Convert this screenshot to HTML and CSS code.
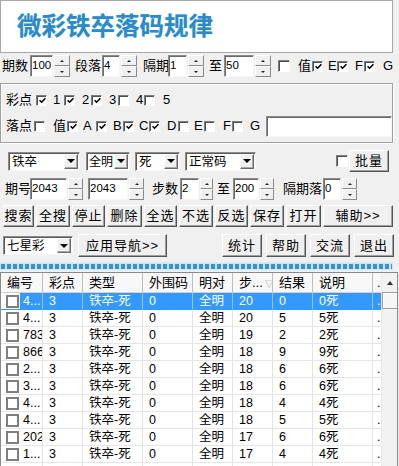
FILE: index.html
```html
<!DOCTYPE html>
<html lang="zh-CN">
<head>
<meta charset="utf-8">
<title>微彩铁卒落码规律</title>
<link rel="stylesheet" href="styles.css">
</head>
<body>
<div class="title">微彩铁卒落码规律</div>

<div class="row r1">
  <span class="lbl" style="margin-left:2px;width:28px">期数</span>
  <span class="in" style="width:23px">100</span><span class="spin" style="width:16px"><i class="up"></i><i class="dn"></i></span>
  <span class="lbl" style="margin-left:5px;width:27px">段落</span>
  <span class="in" style="width:18px">4</span><span class="spin" style="width:16px"><i class="up"></i><i class="dn"></i></span>
  <span class="lbl" style="margin-left:6px;width:25px">隔期</span>
  <span class="in" style="width:19px">1</span><span class="spin" style="width:16px"><i class="up"></i><i class="dn"></i></span>
  <span class="lbl" style="margin-left:5px;width:15px">至</span>
  <span class="in" style="width:30px">50</span><span class="spin" style="width:16px"><i class="up"></i><i class="dn"></i></span>
  <span class="cb big" style="margin-left:7px"></span>
  <span class="lbl" style="margin-left:8px;width:14px">值</span>
  <span class="cb"><svg width="7" height="7" viewBox="0 0 7 7"><path d="M0.6 3.2 L2.6 5.2 L6.4 1.2" fill="none" stroke="#000" stroke-width="1.6"/></svg></span>
  <span class="lbl" style="margin-left:5px;width:9px">E</span>
  <span class="cb"><svg width="7" height="7" viewBox="0 0 7 7"><path d="M0.6 3.2 L2.6 5.2 L6.4 1.2" fill="none" stroke="#000" stroke-width="1.6"/></svg></span>
  <span class="lbl" style="margin-left:7px;width:9px">F</span>
  <span class="cb"><svg width="7" height="7" viewBox="0 0 7 7"><path d="M0.6 3.2 L2.6 5.2 L6.4 1.2" fill="none" stroke="#000" stroke-width="1.6"/></svg></span>
  <span class="lbl" style="margin-left:8px">G</span>
</div>

<div class="group">
  <div class="row g1">
    <span class="lbl" style="margin-left:5px;width:30px">彩点</span>
    <span class="cb"><svg width="7" height="7" viewBox="0 0 7 7"><path d="M0.6 3.2 L2.6 5.2 L6.4 1.2" fill="none" stroke="#000" stroke-width="1.6"/></svg></span>
    <span class="lbl" style="margin-left:6px;width:11px">1</span>
    <span class="cb"><svg width="7" height="7" viewBox="0 0 7 7"><path d="M0.6 3.2 L2.6 5.2 L6.4 1.2" fill="none" stroke="#000" stroke-width="1.6"/></svg></span>
    <span class="lbl" style="margin-left:7px;width:9px">2</span>
    <span class="cb"><svg width="7" height="7" viewBox="0 0 7 7"><path d="M0.6 3.2 L2.6 5.2 L6.4 1.2" fill="none" stroke="#000" stroke-width="1.6"/></svg></span>
    <span class="lbl" style="margin-left:7px;width:9px">3</span>
    <span class="cb"></span>
    <span class="lbl" style="margin-left:7px;width:8px">4</span>
    <span class="cb"></span>
    <span class="lbl" style="margin-left:8px">5</span>
  </div>
  <div class="row g2">
    <span class="lbl" style="margin-left:5px;width:28px">落点</span>
    <span class="cb"></span>
    <span class="lbl" style="margin-left:8px;width:14px">值</span>
    <span class="cb"><svg width="7" height="7" viewBox="0 0 7 7"><path d="M0.6 3.2 L2.6 5.2 L6.4 1.2" fill="none" stroke="#000" stroke-width="1.6"/></svg></span>
    <span class="lbl" style="margin-left:5px;width:13px">A</span>
    <span class="cb"><svg width="7" height="7" viewBox="0 0 7 7"><path d="M0.6 3.2 L2.6 5.2 L6.4 1.2" fill="none" stroke="#000" stroke-width="1.6"/></svg></span>
    <span class="lbl" style="margin-left:6px;width:10px">B</span>
    <span class="cb"><svg width="7" height="7" viewBox="0 0 7 7"><path d="M0.6 3.2 L2.6 5.2 L6.4 1.2" fill="none" stroke="#000" stroke-width="1.6"/></svg></span>
    <span class="lbl" style="margin-left:5px;width:10px">C</span>
    <span class="cb"><svg width="7" height="7" viewBox="0 0 7 7"><path d="M0.6 3.2 L2.6 5.2 L6.4 1.2" fill="none" stroke="#000" stroke-width="1.6"/></svg></span>
    <span class="lbl" style="margin-left:7px;width:11px">D</span>
    <span class="cb"></span>
    <span class="lbl" style="margin-left:5px;width:10px">E</span>
    <span class="cb"></span>
    <span class="lbl" style="margin-left:8px;width:9px">F</span>
    <span class="cb"></span>
    <span class="lbl" style="margin-left:7px;width:16px">G</span>
    <span class="in txt"></span>
  </div>
</div>

<div class="row r3">
  <span class="combo" style="margin-left:8px;width:72px"><span class="ct">铁卒</span><b></b></span>
  <span class="combo narrow" style="margin-left:6px;width:44px"><span class="ct">全明</span><b></b></span>
  <span class="combo" style="margin-left:5px;width:45px"><span class="ct">死</span><b></b></span>
  <span class="combo" style="margin-left:5px;width:71px"><span class="ct">正常码</span><b></b></span>
  <span class="cb big" style="margin-left:80px"></span>
  <span class="btn" style="margin-left:1px;width:40px">批量</span>
</div>

<div class="row r4">
  <span class="lbl" style="margin-left:5px;width:25px">期号</span>
  <span class="in" style="width:37px">2043</span><span class="spin" style="width:15px"><i class="up"></i><i class="dn"></i></span>
  <span class="in" style="margin-left:5px;width:40px">2043</span><span class="spin" style="width:15px"><i class="up"></i><i class="dn"></i></span>
  <span class="lbl" style="margin-left:8px;width:28px">步数</span>
  <span class="in" style="width:19px">2</span><span class="spin" style="width:13px"><i class="up"></i><i class="dn"></i></span>
  <span class="lbl" style="margin-left:4px;width:16px">至</span>
  <span class="in" style="width:26px">200</span><span class="spin" style="width:14px"><i class="up"></i><i class="dn"></i></span>
  <span class="lbl" style="margin-left:9px;width:40px">隔期落</span>
  <span class="in" style="width:18px">0</span><span class="spin" style="width:15px"><i class="up"></i><i class="dn"></i></span>
</div>

<div class="row r5">
  <span class="btn" style="width:31px">搜索</span>
  <span class="btn" style="width:34px">全搜</span>
  <span class="btn" style="width:33px">停止</span>
  <span class="btn" style="width:35px">删除</span>
  <span class="btn" style="width:33px">全选</span>
  <span class="btn" style="width:34px">不选</span>
  <span class="btn" style="width:33px">反选</span>
  <span class="btn" style="width:34px">保存</span>
  <span class="btn" style="width:35px">打开</span>
  <span class="btn" style="width:70px">辅助&gt;&gt;</span>
</div>

<div class="row r6">
  <span class="combo" style="margin-left:3px;width:70px"><span class="ct">七星彩</span><b></b></span>
  <span class="btn" style="margin-left:5px;width:89px">应用导航&gt;&gt;</span>
  <span class="btn" style="margin-left:55px;width:40px">统计</span>
  <span class="btn" style="margin-left:4px;width:40px">帮助</span>
  <span class="btn" style="margin-left:4px;width:40px">交流</span>
  <span class="btn" style="margin-left:4px;width:40px">退出</span>
</div>

<div class="prog"></div>

<div class="list">
  <div class="grid">
    <div class="tr th">
      <span>编号</span><span>彩点</span><span>类型</span><span>外围码</span><span>明对</span><span>步...<em>▽</em></span><span>结果</span><span>说明</span><span class="last">.</span>
    </div>
    <div class="tr sel">
      <span class="c0"><i class="box"></i><span class="t0">4...</span></span><span>3</span><span>铁卒-死</span><span>0</span><span>全明</span><span>20</span><span>0</span><span>0死</span><span class="last">.</span>
    </div>
    <div class="tr">
      <span class="c0"><i class="box"></i><span class="t0">4...</span></span><span>3</span><span>铁卒-死</span><span>0</span><span>全明</span><span>20</span><span>5</span><span>5死</span><span class="last">.</span>
    </div>
    <div class="tr">
      <span class="c0"><i class="box"></i><span class="t0">783</span></span><span>3</span><span>铁卒-死</span><span>0</span><span>全明</span><span>19</span><span>2</span><span>2死</span><span class="last">.</span>
    </div>
    <div class="tr">
      <span class="c0"><i class="box"></i><span class="t0">866</span></span><span>3</span><span>铁卒-死</span><span>0</span><span>全明</span><span>18</span><span>9</span><span>9死</span><span class="last">.</span>
    </div>
    <div class="tr">
      <span class="c0"><i class="box"></i><span class="t0">2...</span></span><span>3</span><span>铁卒-死</span><span>0</span><span>全明</span><span>18</span><span>6</span><span>6死</span><span class="last">.</span>
    </div>
    <div class="tr">
      <span class="c0"><i class="box"></i><span class="t0">3...</span></span><span>3</span><span>铁卒-死</span><span>0</span><span>全明</span><span>18</span><span>6</span><span>6死</span><span class="last">.</span>
    </div>
    <div class="tr">
      <span class="c0"><i class="box"></i><span class="t0">4...</span></span><span>3</span><span>铁卒-死</span><span>0</span><span>全明</span><span>18</span><span>4</span><span>4死</span><span class="last">.</span>
    </div>
    <div class="tr">
      <span class="c0"><i class="box"></i><span class="t0">4...</span></span><span>3</span><span>铁卒-死</span><span>0</span><span>全明</span><span>18</span><span>5</span><span>5死</span><span class="last">.</span>
    </div>
    <div class="tr">
      <span class="c0"><i class="box"></i><span class="t0">202</span></span><span>3</span><span>铁卒-死</span><span>0</span><span>全明</span><span>17</span><span>6</span><span>6死</span><span class="last">.</span>
    </div>
    <div class="tr">
      <span class="c0"><i class="box"></i><span class="t0">1...</span></span><span>3</span><span>铁卒-死</span><span>0</span><span>全明</span><span>17</span><span>4</span><span>4死</span><span class="last">.</span>
    </div>
    <div class="tr">
      <span class="c0"></span><span></span><span></span><span></span><span></span><span></span><span></span><span></span><span class="last"></span>
    </div>
  </div>
  <div class="sb">
    <div class="sb-up"></div>
    <div class="sb-thumb"></div>
  </div>
</div>
</body>
</html>
```

FILE: styles.css
```css
html, body {
  margin: 0;
  padding: 0;
}
body {
  width: 399px;
  height: 466px;
  overflow: hidden;
  background: #f0f0f0;
  color: #000;
  font-family: "Liberation Sans", "Noto Sans CJK SC", sans-serif;
  font-size: 13px;
  line-height: 16px;
}

.title {
  box-sizing: border-box;
  width: 393px;
  height: 53px;
  background: #fff;
  border: 1px solid #a8a8a8;
  display: flex;
  align-items: center;
  padding-left: 16px;
  font-size: 24.5px;
  line-height: 28px;
  font-weight: bold;
  color: #2b8ac9;
  text-shadow: 0 0 1px rgba(43, 138, 201, 0.35);
}

.row {
  display: flex;
  align-items: center;
  height: 22px;
}
.r1 { margin-top: 2px; }
.r3 { margin-top: 7px; }
.r4 { margin-top: 6px; }
.r5 { margin-top: 5px; gap: 2px; padding-left: 3px; }
.r6 { margin-top: 7px; height: 23px; }

.lbl {
  flex: none;
  white-space: nowrap;
}

.in {
  flex: none;
  box-sizing: border-box;
  height: 22px;
  background: #fff;
  border: 1px solid;
  border-color: #8c8c8c #f8f8f8 #f8f8f8 #8c8c8c;
  box-shadow: inset 1px 1px 0 #6a6a6a;
  padding: 2px 0 0 1px;
  font-size: 11.5px;
  line-height: 15px;
  overflow: hidden;
  white-space: nowrap;
}
.txt {
  width: 126px;
  height: 21px;
}

.spin {
  flex: none;
  display: flex;
  flex-direction: column;
  height: 22px;
  margin-left: 1px;
}
.spin i {
  flex: 1;
  box-sizing: border-box;
  border: 1px solid;
  border-color: #fff #8a8a8a #8a8a8a #fff;
  background: #f0f0f0;
  display: flex;
  align-items: center;
  justify-content: center;
}
.spin .up::after {
  content: "";
  border-left: 2px solid transparent;
  border-right: 2px solid transparent;
  border-bottom: 2px solid #222;
}
.spin .dn::after {
  content: "";
  border-left: 2px solid transparent;
  border-right: 2px solid transparent;
  border-top: 2px solid #222;
}

.cb {
  flex: none;
  box-sizing: border-box;
  width: 11px;
  height: 11px;
  background: #fff;
  border: 1px solid;
  border-color: #7e7e7e #fff #fff #7e7e7e;
  box-shadow: inset 1px 1px 0 #505050;
  display: flex;
  align-items: center;
  justify-content: center;
  padding: 1px 0 0 1px;
}
.cb svg { display: block; }
.cb.big {
  width: 12px;
  height: 12px;
}

.group {
  margin-top: 6px;
  box-sizing: border-box;
  width: 393px;
  height: 60px;
  border: 1px solid #a0a0a0;
  box-shadow: inset 1px 1px 0 #fff, 1px 1px 0 #fff;
  padding-top: 6px;
}
.g1 { height: 20px; }
.g2 { margin-top: 5px; }

.combo {
  flex: none;
  box-sizing: border-box;
  height: 19px;
  background: #fff;
  border: 1px solid;
  border-color: #8c8c8c #f8f8f8 #f8f8f8 #8c8c8c;
  box-shadow: inset 1px 1px 0 #5a5a5a;
  display: flex;
  padding: 1px;
}
.combo .ct {
  flex: 1;
  min-width: 0;
  padding-left: 2px;
  font-size: 12.5px;
  line-height: 16px;
  white-space: nowrap;
  overflow: hidden;
}
.combo.narrow .ct {
  padding-left: 1px;
  font-size: 12px;
  overflow: visible;
}
.combo b {
  flex: none;
  width: 14px;
  box-sizing: border-box;
  border: 1px solid;
  border-color: #fff #6a6a6a #6a6a6a #fff;
  box-shadow: inset -1px -1px 0 #a8a8a8;
  background: #f0f0f0;
  display: flex;
  align-items: center;
  justify-content: center;
}
.combo b::after {
  content: "";
  border-left: 4px solid transparent;
  border-right: 4px solid transparent;
  border-top: 4px solid #000;
}

.btn {
  flex: none;
  box-sizing: border-box;
  height: 22px;
  background: #f0f0f0;
  border: 1px solid;
  border-color: #fff #555 #555 #fff;
  box-shadow: inset -1px -1px 0 #a0a0a0;
  display: flex;
  align-items: center;
  justify-content: center;
  white-space: nowrap;
  letter-spacing: 1px;
}
.r6 .btn { height: 23px; }

.prog {
  margin-top: 5px;
  box-sizing: border-box;
  width: 393px;
  height: 8px;
  padding: 1px 1px;
  background: repeating-linear-gradient(90deg, #3f8fca 0 4px, #c8e6f6 4px 6px) content-box, #c8e6f6;
  border-top: 1px solid #d8ecf7;
}

.list {
  margin-top: 2px;
  box-sizing: border-box;
  width: 398px;
  height: 200px;
  border: 1px solid #8a8a8a;
  border-bottom: none;
  background: #fff;
  display: flex;
  overflow: hidden;
}
.grid {
  flex: none;
  width: 380px;
  overflow: hidden;
  font-size: 12.5px;
}
.tr {
  display: grid;
  grid-template-columns: 42px 40px 60px 50px 40px 40px 40px 60px 8px;
  height: 17px;
}
.tr > span {
  box-sizing: border-box;
  border-right: 1px solid #e4e4e4;
  border-bottom: 1px solid #e6e6e6;
  padding-left: 6px;
  line-height: 16px;
  white-space: nowrap;
  overflow: hidden;
}
.tr > span.last {
  padding-left: 4px;
  border-right: none;
}
.th {
  height: 20px;
  background: #f8f8f8;
  font-size: 13px;
}
.th > span {
  border-right: 1px solid #bdbdbd;
  border-bottom: 1px solid #d2d2d2;
  line-height: 19px;
}
.th em {
  font-style: normal;
  color: #9a9a9a;
  font-size: 9px;
  margin-left: 2px;
}
.tr > span.c0 {
  display: flex;
  align-items: center;
  padding-left: 5px;
}
.box {
  flex: none;
  box-sizing: border-box;
  width: 13px;
  height: 13px;
  border: 2px solid #7f7f7f;
  background: #fff;
}
.t0 {
  flex: 1;
  align-self: stretch;
  padding-left: 3px;
  margin-left: 1px;
}
.sel > span:not(.c0),
.sel .t0 {
  background: #3399ff;
  color: #fff;
}
.sel > span {
  border-right-color: #8fc6ff;
  border-bottom-color: #3399ff;
}

.sb {
  flex: none;
  width: 16px;
  background: #f2f2f2;
  border-left: 1px solid #e8e8e8;
}
.sb-up {
  height: 19px;
  display: flex;
  align-items: center;
  justify-content: center;
}
.sb-up::after {
  content: "";
  border-left: 3px solid transparent;
  border-right: 3px solid transparent;
  border-bottom: 4px solid #333;
}
.sb-thumb {
  box-sizing: border-box;
  height: 17px;
  background: #f6f6f6;
  border: 1px solid #9c9c9c;
  box-shadow: inset 1px 1px 0 #fff;
}
```
